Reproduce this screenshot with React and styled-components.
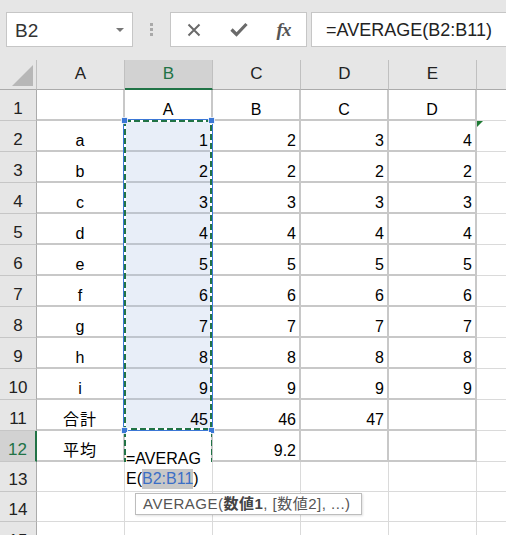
import React from 'react';
import styled, { createGlobalStyle } from 'styled-components';

const GlobalStyle = createGlobalStyle`
  html, body {
    margin: 0;
    padding: 0;
    background: #fff;
    overflow: hidden;
  }
  body {
    font-family: "Liberation Sans", "Noto Sans CJK JP", sans-serif;
  }
`;

const GREEN = '#217346';

const Window = styled.div`
  width: 506px;
  height: 535px;
  overflow: hidden;
  background: #fff;
  display: flex;
  flex-direction: column;
`;

const FormulaBar = styled.div`
  flex: none;
  height: 60px;
  box-sizing: border-box;
  padding: 12px 0 0 6px;
  background: #e6e6e6;
  display: flex;
  align-items: flex-start;
`;

const NameBox = styled.div`
  flex: none;
  width: 127px;
  height: 35px;
  box-sizing: border-box;
  border: 1px solid #c6c6c6;
  background: #fff;
  display: flex;
  align-items: center;
  justify-content: space-between;
  padding: 2px 8px 0 8px;
  font-size: 19px;
  color: #333;
`;

const DropArrow = styled.span`
  width: 0;
  height: 0;
  margin-bottom: 2px;
  border-left: 4px solid transparent;
  border-right: 4px solid transparent;
  border-top: 4px solid #777;
`;

const Grip = styled.div`
  flex: none;
  width: 37px;
  height: 35px;
  display: flex;
  flex-direction: column;
  align-items: center;
  justify-content: center;
  gap: 2px;
`;

const GripDot = styled.span`
  width: 3px;
  height: 3px;
  background: #a9a9a9;
`;

const ButtonGroup = styled.div`
  flex: none;
  width: 137px;
  height: 35px;
  box-sizing: border-box;
  border: 1px solid #c6c6c6;
  background: #fff;
  display: flex;
  align-items: center;
`;

const BarButton = styled.div`
  width: 45px;
  height: 33px;
  display: flex;
  align-items: center;
  justify-content: center;
  color: #6a6a6a;
`;

const FxLabel = styled.span`
  font-family: "Liberation Serif", serif;
  font-style: italic;
  font-weight: bold;
  font-size: 19px;
  color: #555;
  letter-spacing: -1px;
`;

const FormulaInput = styled.div`
  flex: 1;
  height: 35px;
  margin-left: 4px;
  box-sizing: border-box;
  border: 1px solid #c6c6c6;
  border-right: none;
  background: #fff;
  display: flex;
  align-items: center;
  padding: 1px 0 0 14px;
  font-size: 18px;
  color: #222;
  white-space: nowrap;
`;

const Sheet = styled.div`
  position: relative;
  flex: 1;
  display: grid;
  grid-template-columns: 37px repeat(6, 88px);
  grid-template-rows: 30px repeat(12, 31px) 30px 30px 31px;
  overflow: hidden;
`;

const Corner = styled.div`
  box-sizing: border-box;
  background: #e6e6e6;
  border-right: 1px solid #c0c0c0;
  border-bottom: 1px solid #ababab;
  display: flex;
  align-items: flex-end;
  justify-content: flex-end;
  padding: 0 3px 3px 0;
`;

const ColHeader = styled.div`
  box-sizing: border-box;
  background: ${(p) => (p.$active ? '#d2d2d2' : '#e6e6e6')};
  border-right: 1px solid #c0c0c0;
  border-bottom: ${(p) => (p.$active ? `2px solid ${GREEN}` : '1px solid #ababab')};
  color: ${(p) => (p.$active ? GREEN : '#222')};
  display: flex;
  align-items: center;
  justify-content: center;
  font-size: 17px;
  padding-bottom: 1px;
`;

const RowHeader = styled.div`
  box-sizing: border-box;
  background: ${(p) => (p.$active ? '#d2d2d2' : '#e6e6e6')};
  border-right: ${(p) => (p.$active ? `2px solid ${GREEN}` : '1px solid #ababab')};
  border-bottom: 1px solid #c6c6c6;
  color: ${(p) => (p.$active ? GREEN : '#222')};
  display: flex;
  align-items: flex-end;
  justify-content: center;
  font-size: 17px;
  line-height: 18px;
  padding-bottom: 2px;
`;

const Cell = styled.div`
  position: relative;
  box-sizing: border-box;
  background: ${(p) => (p.$sel ? '#e8eef8' : '#fff')};
  border-right: ${(p) => (p.$table ? '2px solid #c8c8c8' : '1px solid #dadada')};
  border-bottom: ${(p) =>
    p.$sel ? '2px solid #bfc5ce' : p.$table ? '2px solid #c8c8c8' : '1px solid #dadada'};
  display: flex;
  align-items: flex-end;
  justify-content: ${(p) =>
    p.$align === 'right' ? 'flex-end' : p.$align === 'center' ? 'center' : 'flex-start'};
  padding: 0 3px 0 3px;
  font-size: 16px;
  line-height: 18px;
  color: #000;
  white-space: nowrap;
  letter-spacing: ${(p) => (p.$cjk ? '1px' : '0')};
`;

const ErrorMark = styled.span`
  position: absolute;
  top: 0;
  left: 0;
  width: 0;
  height: 0;
  border-top: 6px solid #1e7b34;
  border-right: 6px solid transparent;
`;

const Marquee = styled.svg`
  position: absolute;
  left: 118px;
  top: 54px;
  pointer-events: none;
`;

const Editor = styled.div`
  position: absolute;
  left: 126px;
  top: 372px;
  width: 85px;
  height: 58px;
  box-sizing: border-box;
  background: #fff;
  padding-top: 17px;
  font-size: 16px;
  line-height: 20px;
  color: #000;
`;

const RangeRef = styled.span`
  color: #3b6fc6;
  background: #c8c8c8;
  display: inline-block;
  line-height: 20px;
`;

const Tooltip = styled.div`
  position: absolute;
  left: 135px;
  top: 433px;
  width: 227px;
  height: 22px;
  box-sizing: border-box;
  border: 1px solid #bdbdbd;
  background: #fff;
  box-shadow: 1px 1px 2px rgba(0, 0, 0, 0.12);
  padding: 0 0 0 7px;
  font-size: 15px;
  line-height: 20px;
  letter-spacing: 0.5px;
  color: #555;
  white-space: nowrap;
`;

const Bold = styled.b`
  font-weight: bold;
  color: #444;
`;

const COLS = ['A', 'B', 'C', 'D', 'E', 'F'];

const rowData = () => {
  const rows = [['', 'A', 'B', 'C', 'D']];
  const letters = 'abcdefghi';
  for (let r = 2; r <= 10; r++) {
    const n = String(r - 1);
    if (r === 2) rows.push(['a', '1', '2', '3', '4']);
    else if (r === 3) rows.push(['b', '2', '2', '2', '2']);
    else rows.push([letters[r - 2], n, n, n, n]);
  }
  rows.push(['合計', '45', '46', '47', '']);
  rows.push(['平均', '', '9.2', '', '']);
  return rows;
};

const DATA = rowData();

function CloseIcon() {
  return (
    <svg width="14" height="14" viewBox="0 0 14 14">
      <path d="M1.5 1.5 L12.5 12.5 M12.5 1.5 L1.5 12.5" stroke="#6a6a6a" strokeWidth="2" fill="none" />
    </svg>
  );
}

function CheckIcon() {
  return (
    <svg width="18" height="15" viewBox="0 0 18 15">
      <path d="M1.5 7.5 L6.5 12.5 L16.5 2" stroke="#6a6a6a" strokeWidth="3.2" fill="none" />
    </svg>
  );
}

function CornerTriangle() {
  return (
    <svg width="21" height="21" viewBox="0 0 21 21">
      <polygon points="21,0 21,21 0,21" fill="#b7b7b7" />
    </svg>
  );
}

function SelectionMarquee() {
  // page coords, shifted by the svg's own offset
  const ox = 118;
  const oy = 114;
  const x = (v) => v - ox;
  const y = (v) => v - oy;
  const handles = [
    [124.5, 120.5],
    [211.5, 120.5],
    [124.5, 430.5],
    [211.5, 430.5],
  ];
  return (
    <Marquee width="100" height="356" viewBox="0 0 100 356">
      <rect x={x(123.5)} y={y(119.5)} width="89" height="311" fill="none" stroke="#3b77d6" strokeWidth="1" />
      <rect x={x(125)} y={y(121)} width="86" height="308" fill="none" stroke="#fff" strokeWidth="2" />
      <rect x={x(125)} y={y(121)} width="86" height="308" fill="none" stroke={GREEN} strokeWidth="2" strokeDasharray="6 3" />
      <line x1={x(125)} y1={y(431)} x2={x(125)} y2={y(462)} stroke={GREEN} strokeWidth="2" strokeDasharray="6 3" />
      <line x1={x(211)} y1={y(431)} x2={x(211)} y2={y(462)} stroke={GREEN} strokeWidth="2" strokeDasharray="6 3" />
      {handles.map(([hx, hy], i) => (
        <rect key={i} x={x(hx) - 3} y={y(hy) - 3} width="6" height="6" fill="#3b77d6" stroke="#fff" strokeWidth="0.8" />
      ))}
    </Marquee>
  );
}

export default function App() {
  const totalRows = 15;
  const rows = [];
  for (let r = 1; r <= totalRows; r++) {
    const inTable = r <= 12;
    const values = inTable ? DATA[r - 1] : ['', '', '', '', ''];
    rows.push(
      <RowHeader key={`h${r}`} $active={r === 12}>
        {r}
      </RowHeader>
    );
    COLS.forEach((c, ci) => {
      const table = inTable && ci < 5;
      const sel = ci === 1 && r >= 2 && r <= 11;
      const v = ci < 5 ? values[ci] : '';
      const align = r === 1 || ci === 0 ? 'center' : 'right';
      const cjk = /[^\x00-\x7f]/.test(v);
      rows.push(
        <Cell key={`${c}${r}`} $table={table} $sel={sel} $align={align} $cjk={cjk}>
          {v}
          {c === 'F' && r === 2 && <ErrorMark />}
        </Cell>
      );
    });
  }

  return (
    <Window>
      <GlobalStyle />
      <FormulaBar>
        <NameBox>
          <span>B2</span>
          <DropArrow />
        </NameBox>
        <Grip>
          <GripDot />
          <GripDot />
          <GripDot />
        </Grip>
        <ButtonGroup>
          <BarButton>
            <CloseIcon />
          </BarButton>
          <BarButton>
            <CheckIcon />
          </BarButton>
          <BarButton>
            <FxLabel>fx</FxLabel>
          </BarButton>
        </ButtonGroup>
        <FormulaInput>=AVERAGE(B2:B11)</FormulaInput>
      </FormulaBar>

      <Sheet>
        <Corner>
          <CornerTriangle />
        </Corner>
        {COLS.map((c) => (
          <ColHeader key={c} $active={c === 'B'}>
            {c === 'F' ? '' : c}
          </ColHeader>
        ))}
        {rows}

        <SelectionMarquee />
        <Editor>
          =AVERAG
          <br />
          E(<RangeRef>B2:B11</RangeRef>)
        </Editor>
        <Tooltip>
          AVERAGE(<Bold>数値1</Bold>, [数値2], ...)
        </Tooltip>
      </Sheet>
    </Window>
  );
}
